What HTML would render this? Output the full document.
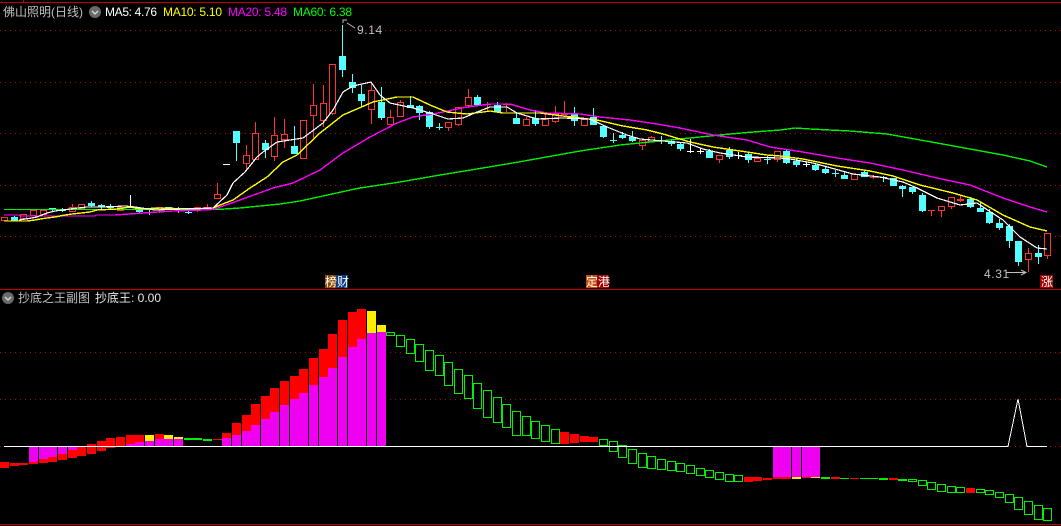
<!DOCTYPE html>
<html><head><meta charset="utf-8"><style>
html,body{margin:0;padding:0;background:#000;width:1061px;height:526px;overflow:hidden}
svg{display:block;position:absolute;left:0;top:0}
text{font-family:"Liberation Sans","WenQuanYi Zen Hei","Noto Sans CJK SC",sans-serif;font-size:12px}
</style></head><body>
<svg id="s" width="1061" height="526" viewBox="0 0 1061 526" xmlns="http://www.w3.org/2000/svg">
<rect width="1061" height="526" fill="#000"/>
<g fill="#c00000" shape-rendering="crispEdges">
<rect x="0" y="2" width="1061" height="1"/><rect x="23" y="0" width="1" height="2"/>
<rect x="0" y="289" width="1061" height="1"/><rect x="0" y="524" width="1061" height="1"/>
</g>
<g stroke="#a01010" stroke-width="1" stroke-dasharray="1 4" shape-rendering="crispEdges">
<path d="M0 30.5H1061M0 82.5H1061M0 133.5H1061M0 185.5H1061M0 236.5H1061M0 352.5H1061M0 399.5H1061M0 446.5H1061"/>
</g>
<g id="sub"></g>
<path d="M4 446.5H1008L1018 399L1027 446.5H1047" fill="none" stroke="#fff" stroke-width="1" shape-rendering="crispEdges"/>
<g id="can"></g>
<g id="ma" fill="none" shape-rendering="crispEdges"></g>
<path d="M343 23L343 20H347M347 23L355 28M1006 272.5H1026M1021 270L1026 272.5L1021 275" fill="none" stroke="#c0c0c0" stroke-width="1"/>
<text x="357" y="34" fill="#c0c0c0" letter-spacing=".6">9.14</text>
<text x="984" y="278" fill="#c0c0c0" letter-spacing=".6">4.31</text>
<text x="3" y="16" fill="#c0c0c0">佛山照明(日线)</text>
<circle cx="95" cy="12" r="6" fill="#6a6a6a"/><path d="M92 11L95 14L98 11" fill="none" stroke="#ddd" stroke-width="1.3"/>
<text x="105" y="16" fill="#fff" textLength="52">MA5: 4.76</text>
<text x="163" y="16" fill="#ffff00" textLength="59">MA10: 5.10</text>
<text x="228" y="16" fill="#ff00ff" textLength="59">MA20: 5.48</text>
<text x="293" y="16" fill="#00ff00" textLength="59">MA60: 6.38</text>
<circle cx="8" cy="298" r="6" fill="#6a6a6a"/><path d="M5 297L8 300L11 297" fill="none" stroke="#ddd" stroke-width="1.3"/>
<text x="18" y="302" fill="#c0c0c0">抄底之王副图</text>
<text x="95" y="302" fill="#e8e8e8">抄底王: 0.00</text>
<g shape-rendering="crispEdges">
<rect x="325" y="275" width="11" height="13" fill="#8a4a00"/><rect x="336" y="275" width="12" height="13" fill="#0a3a7a"/>
<rect x="586" y="275" width="11" height="13" fill="#c05010"/><rect x="597" y="275" width="12" height="13" fill="#a00000"/>
<rect x="1040" y="275" width="13" height="13" fill="#a00000"/>
</g>
<g fill="#fff">
<text x="325" y="286">榜财</text>
<text x="586" y="286">定港</text>
<text x="1041" y="286">涨</text>
</g>
</svg>
<script>
var C=[['r',217,220,217,220],['c',217,221,216,221],['r',214,218,214,218],['r',210,215,210,215],['r',210,214,210,214],['c',208,210,208,211],['c',210,211,208,212],['r',207,211,204,211],['r',204,208,204,208],['c',203,206,201,207],['c',205,207,204,209],['c',207,208,204,209],['r',207,210,207,211],['w',207,208,195,208],['c',210,212,210,214],['c',212,213,210,215],['R',207,209,207,213],['c',207,210,207,210],['c',208,209,207,213],['c',212,213,210,214],['r',207,210,207,212],['R',207,208,204,210],['r',194,198,183,199],['w',164,165,164,165],['c',131,143,131,161],['r',155,163,145,170],['r',133,159,122,159],['c',143,150,140,158],['r',135,156,117,161],['r',134,139,119,148],['c',146,154,126,154],['r',120,158,120,158],['r',105,115,84,138],['r',103,120,85,127],['r',64,113,64,115],['c',56,70,25,77],['c',82,88,74,93],['c',94,101,85,107],['r',90,109,83,124],['c',102,118,87,120],['r',117,124,110,124],['r',102,116,100,116],['c',105,108,96,108],['c',106,113,105,120],['c',112,127,111,129],['c',127,128,123,130],['r',122,127,122,131],['r',107,124,107,126],['r',97,105,89,108],['c',97,105,95,105],['R',104,105,102,111],['c',105,112,102,112],['R',104,105,103,112],['c',118,124,113,124],['r',119,125,117,125],['c',118,124,110,126],['r',119,125,113,125],['r',114,121,106,123],['R',113,115,101,115],['c',113,121,107,126],['r',119,125,119,126],['c',117,125,108,125],['c',126,137,126,138],['c',140,141,133,143],['c',135,138,132,139],['c',137,141,131,142],['r',140,145,140,150],['r',137,141,136,142],['c',140,141,136,144],['c',141,144,140,146],['c',144,149,142,151],['w',151,152,139,153],['w',151,152,148,154],['c',151,158,149,158],['r',155,159,155,163],['c',150,157,147,159],['w',155,156,152,159],['c',154,160,153,163],['r',158,161,158,162],['c',159,160,156,164],['r',151,159,151,162],['c',151,163,150,164],['c',161,165,158,167],['w',164,165,162,167],['c',165,170,163,171],['c',169,173,167,174],['c',173,174,170,177],['c',175,179,172,179],['r',174,179,174,179],['c',172,177,171,177],['R',177,178,175,179],['c',177,178,176,182],['c',178,186,178,186],['c',186,189,185,197],['c',187,192,187,194],['c',195,211,193,212],['R',210,211,210,216],['r',206,210,206,217],['r',197,206,197,209],['R',199,201,196,202],['c',199,207,197,208],['c',208,212,202,212],['c',212,223,209,224],['c',223,228,219,230],['c',226,241,224,248],['c',241,262,241,266],['r',253,259,248,272],['c',253,257,245,264],['r',233,255,233,259]];
var S=[[['r',462,468]],[['r',463,466]],[['r',463,465]],[['m',447,462],['r',462,464]],[['m',447,459],['r',459,463]],[['m',447,457],['r',457,462]],[['m',447,454],['r',454,460]],[['m',447,450],['r',450,458]],[['r',447,456]],[['r',444,454]],[['r',441,451]],[['r',438,448]],[['r',437,446]],[['r',435,444],['m',444,446]],[['r',435,442],['m',442,446]],[['y',435,441],['m',441,446]],[['r',434,439],['m',439,446]],[['y',435,439],['m',439,446]],[['y',437,439],['m',439,446]],[['g',438,440]],[['g',438,440]],[['g',439,441]],[['r',439,440]],[['r',433,438],['m',438,446]],[['r',423,435],['m',435,446]],[['r',415,431],['m',431,446]],[['r',404,425],['m',425,446]],[['r',396,419],['m',419,446]],[['r',388,412],['m',412,446]],[['r',381,405],['m',405,446]],[['r',376,399],['m',399,446]],[['r',369,393],['m',393,446]],[['r',358,385],['m',385,446]],[['r',349,377],['m',377,446]],[['r',334,368],['m',368,446]],[['r',320,357],['m',357,446]],[['r',312,347],['m',347,446]],[['r',309,339],['m',339,446]],[['y',311,333],['m',333,446]],[['y',325,332],['m',332,446]],[['h',332,336]],[['h',335,347]],[['h',339,354]],[['h',344,362]],[['h',350,371]],[['h',355,376]],[['h',362,386]],[['h',369,394]],[['h',375,399]],[['h',383,409]],[['h',390,418]],[['h',397,423]],[['h',404,428]],[['h',411,436]],[['h',416,436]],[['h',421,439]],[['h',425,442]],[['h',429,444]],[['r',432,444]],[['r',434,443]],[['r',436,442]],[['r',437,442]],[['h',439,446]],[['h',441,452]],[['h',445,458]],[['h',449,464]],[['h',453,468]],[['h',456,469]],[['h',459,470]],[['h',461,471]],[['h',463,472]],[['h',465,474]],[['h',468,476]],[['h',470,478]],[['h',472,480]],[['h',474,482]],[['h',475,482]],[['r',477,482]],[['r',477,481]],[['r',478,480]],[['m',447,477],['r',477,479]],[['m',447,477],['r',477,479]],[['m',447,477],['y',477,479]],[['m',447,477],['r',477,478]],[['m',447,477],['y',477,478]],[['g',477,479]],[['r',477,479]],[['g',478,479]],[['r',478,479]],[['g',478,479]],[['g',478,479]],[['g',478,480]],[['r',478,480]],[['g',479,481]],[['h',479,482]],[['h',480,486]],[['h',482,490]],[['h',484,492]],[['h',486,493]],[['h',487,493]],[['r',488,493]],[['h',489,493]],[['h',490,495]],[['h',492,498]],[['h',494,503]],[['h',497,510]],[['h',501,515]],[['h',505,520]],[['h',508,521]]];
var M=[
['#00ee00',1.4,'4,209.5 217,209.5 240,208 280,204 300,201 355,189 360,188 400,182 440,175 480,168.5 513,163 580,151 620,145 680,139 720,135 747,132.5 780,130 795,128 810,129 850,131 887,134 937,143 970,149 1003,155 1030,161 1047,167'],
['#ff00ff',1.4,'4,215 19,215 20,216 95,216 96,215 115,215 143,213 173,211 213,209.5 240,200 273,188 293,183 320,170 343,153 370,137 397,123 413,117 433,114 467,107 490,104 510,104 530,110 547,113 580,114 600,117 630,120 657,124 680,128 713,135 747,140 770,147 803,152 837,158 870,163 903,170 937,178 970,185 1003,198 1030,207 1047,212'],
['#ffff00',1.4,'4,221 27,221 35,220 40,219 47,218 55,217 65,215 72,214 90,212 97,210 117,209 130,207 140,209 160,208 190,209 213,208 220,205 233,200 250,188 267,177 283,162 297,155 320,133 343,115 373,102 397,97 413,97 430,105 447,112 467,114 483,112 490,111 503,113 540,113 563,116 597,120 623,126 647,130 663,134 690,142 713,147 747,152 767,155 780,156 803,159 837,166 870,171 893,176 920,185 953,193 977,200 1003,215 1030,227 1047,231'],
['#ffffff',1.2,'19,220 32,218 37,217 47,213 55,211 70,209 87,207 103,207 125,206 135,207 155,210 213,208 227,195 233,183 245,172 257,157 263,152 277,142 303,138 323,123 333,110 343,92 353,86 371,82 380,95 390,103 413,108 433,114 448,119 463,118 477,112 490,107 507,107 517,113 537,119 563,118 590,119 607,127 627,135 640,139 663,141 687,143 703,149 720,153 747,157 780,158 790,159 813,163 853,174 880,177 903,182 917,188 937,198 960,205 977,203 1003,220 1020,237 1037,248 1047,249']
];
var NS='http://www.w3.org/2000/svg';
function el(p,t,a){var e=document.createElementNS(NS,t);for(var k in a)e.setAttribute(k,a[k]);e.setAttribute('shape-rendering','crispEdges');p.appendChild(e);return e}
function box(p,x,y,w,h,col){
 el(p,'rect',{x:x,y:y,width:w,height:h,fill:col});
 if(w>2&&h>2) el(p,'rect',{x:x+1,y:y+1,width:w-2,height:h-2,fill:'#000'});
}
function cx(i){return Math.floor(4.5+9.66*i)}
var can=document.getElementById('can'),sub=document.getElementById('sub'),ma=document.getElementById('ma');
var CL={r:'#ff3232',R:'#ff3232',c:'#54ffff',w:'#ffffff'};
C.forEach(function(d,i){var c=cx(i),k=d[0],col=CL[k];
 el(can,'rect',{x:c,y:d[3],width:1,height:Math.max(1,d[4]-d[3]),fill:col});
 if(k=='r') box(can,c-3,d[1],7,d[2]-d[1]+1,col);
 else el(can,'rect',{x:c-3,y:d[1],width:7,height:d[2]-d[1],fill:col});
});
var SC={r:'#ff0000',y:'#ffee00',m:'#f000f0',g:'#00f000'};
S.forEach(function(b,i){var l=cx(i)-4;
 b.forEach(function(s){
  if(s[0]=='h') box(sub,l,s[1],9,s[2]-s[1],'#00f000');
  else el(sub,'rect',{x:l,y:s[1],width:9,height:s[2]-s[1],fill:SC[s[0]]});
 });
});
M.forEach(function(m){el(ma,'polyline',{points:m[2],stroke:m[0],fill:'none','stroke-width':m[1]})});
</script>
</body></html>
